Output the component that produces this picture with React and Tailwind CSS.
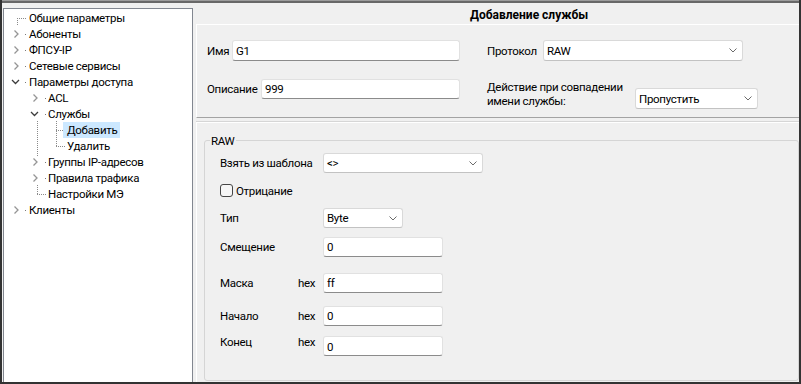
import React from 'react'

const font = "font-['Roboto','Liberation_Sans',sans-serif]"

const treeItems = [
  { label: 'Общие параметры', level: 0 },
  { label: 'Абоненты', level: 0, state: 'closed' },
  { label: 'ФПСУ-IP', level: 0, state: 'closed' },
  { label: 'Сетевые сервисы', level: 0, state: 'closed' },
  { label: 'Параметры доступа', level: 0, state: 'open' },
  { label: 'ACL', level: 1, state: 'closed' },
  { label: 'Службы', level: 1, state: 'open' },
  { label: 'Добавить', level: 2, selected: true },
  { label: 'Удалить', level: 2 },
  { label: 'Группы IP-адресов', level: 1, state: 'closed' },
  { label: 'Правила трафика', level: 1, state: 'closed' },
  { label: 'Настройки МЭ', level: 1 },
  { label: 'Клиенты', level: 0, state: 'closed' },
]

const indent = ['pl-[5px]', 'pl-[24px]', 'pl-[43px]']

function Expander({ state }) {
  return (
    <svg width="20" height="16" viewBox="0 0 20 16" className="shrink-0">
      {state === 'closed' && (
        <path d="M5.5 4.5 L9 8 L5.5 11.5" fill="none" stroke="#959595" strokeWidth="1.3" />
      )}
      {state === 'open' && (
        <path d="M3 6 L6.5 9.5 L10 6" fill="none" stroke="#3c3c3c" strokeWidth="1.3" />
      )}
    </svg>
  )
}

// dotted connector lines of the tree view
function TreeLines() {
  const dots = [
    [21, 25], [21, 41], [21, 57], [21, 73], [21, 201],
    [41, 89], [41, 105], [41, 153], [41, 169],
  ]
  const dash = { stroke: '#8a8a8a', strokeWidth: 1, strokeDasharray: '1 1', fill: 'none' }
  return (
    <svg className="pointer-events-none absolute inset-0" width="188" height="374">
      <path d="M13 9.5 H23" style={dash} />
      <path d="M13.5 9 V17" style={dash} />
      <path d="M33.5 112 V147" style={dash} />
      <path d="M33.5 176 V186" style={dash} />
      <path d="M33 185.5 H43" style={dash} />
      <path d="M52.5 112 V138" style={dash} />
      <path d="M52 121.5 H60" style={dash} />
      <path d="M52 137.5 H62" style={dash} />
      {dots.map(([x, y]) => (
        <rect key={`${x}-${y}`} x={x} y={y} width="1" height="1" fill="#7a7a7a" />
      ))}
    </svg>
  )
}

function Tree() {
  return (
    <div className="relative ml-px mt-[5px] w-[190px] shrink-0 border border-b-0 border-[#828790] bg-white pt-px">
      <TreeLines />
      {treeItems.map((item) => (
        <div key={item.label} className={`flex h-4 items-center ${indent[item.level]}`}>
          <Expander state={item.state} />
          <span
            className={
              item.selected
                ? '-ml-[4px] h-4 whitespace-nowrap bg-[#cce8ff] pl-[4px] pr-[3px] leading-4'
                : 'whitespace-nowrap leading-4'
            }
          >
            {item.label}
          </span>
        </div>
      ))}
    </div>
  )
}

function Chevron() {
  return (
    <svg width="8" height="5" viewBox="0 0 8 5" className="shrink-0">
      <path d="M0.5 0.5 L4 4 L7.5 0.5" fill="none" stroke="#6b6b6b" strokeWidth="1" />
    </svg>
  )
}

function Select({ value, className }) {
  return (
    <div
      className={`flex shrink-0 items-center justify-between rounded-[3px] border border-[#d9d9d9] border-b-[#c2c2c2] bg-white pl-[3px] pr-[5px] ${className}`}
    >
      <span>{value}</span>
      <Chevron />
    </div>
  )
}

function Input({ value, className }) {
  return (
    <div
      className={`flex shrink-0 items-center rounded-[3px] border border-[#e1e1e1] border-b-[#8b8b8b] bg-white pl-[3px] ${className}`}
    >
      {value}
    </div>
  )
}

function HexRow({ label, value, className }) {
  return (
    <div className={`flex h-[20px] items-center ${className}`}>
      <span className="w-[78px] shrink-0 whitespace-nowrap">{label}</span>
      <span className="w-[25px] shrink-0">hex</span>
      <Input value={value} className="h-full w-[120px]" />
    </div>
  )
}

export default function App() {
  return (
    <div
      className={`flex h-[384px] w-[801px] flex-col overflow-hidden border-b-2 border-l-2 border-r-2 border-[#333] bg-[#f0f0f0] text-[11.5px] leading-4 tracking-[-0.3px] text-black ${font}`}
    >
      <div className="h-px shrink-0 bg-[#9c9c9c]" />
      <div className="h-[2px] shrink-0 bg-[#686868]" />

      <div className="flex min-h-0 flex-1">
        <Tree />

        <main className="ml-[3px] flex min-w-0 flex-1 flex-col">
          {/* Title */}
          <div className="h-[21px] shrink-0 whitespace-nowrap pl-[274px] pt-[4px] text-[12px] font-bold tracking-normal">
            Добавление службы
          </div>

          {/* Name / protocol block */}
          <div className="flex h-[94px] shrink-0 border-b border-l border-t border-white border-b-[#a3a3a3]">
            <div className="ml-[10px] flex w-[253px] shrink-0 flex-col">
              <div className="mt-[15px] flex h-[21px] items-center">
                <span className="w-[25px] shrink-0 whitespace-nowrap">Имя</span>
                <Input value="G1" className="h-full flex-1" />
              </div>
              <div className="mt-[18px] flex h-[20px] items-center">
                <span className="w-[54px] shrink-0 whitespace-nowrap">Описание</span>
                <Input value="999" className="h-full flex-1" />
              </div>
            </div>

            <div className="ml-[27px] flex flex-col">
              <div className="mt-[15px] flex h-[21px] items-center">
                <span className="w-[56px] shrink-0 whitespace-nowrap">Протокол</span>
                <Select value="RAW" className="h-full w-[200px]" />
              </div>
              <div className="mt-[18px] flex items-start">
                <span className="w-[148px] shrink-0 whitespace-nowrap pt-px leading-[14px]">
                  Действие при совпадении
                  <br />
                  имени службы:
                </span>
                <Select value="Пропустить" className="mt-[9px] h-[21px] w-[123px]" />
              </div>
            </div>
          </div>

          {/* RAW parameters */}
          <div className="mt-[3px] flex min-h-0 flex-1 flex-col border-t border-[#d6d6d6]">
            <div className="flex min-h-0 flex-1 flex-col border-l border-t border-white">
              <div className="mb-px ml-[7px] mt-[17px] flex-1 rounded-[3px] border border-[#d5d5d5]">
                <div className="-mt-[8px] ml-[5px] w-fit bg-[#f0f0f0] px-px leading-4">RAW</div>

                <div className="pl-[15px]">
                  <div className="mt-[4px] flex h-[20px] items-center">
                    <span className="w-[103px] shrink-0 whitespace-nowrap">Взять из шаблона</span>
                    <Select value="<>" className="h-full w-[160px]" />
                  </div>

                  <div className="mt-[11px] flex h-[13px] items-center">
                    <span className="h-[13px] w-[13px] shrink-0 rounded-[3px] border border-[#454545] bg-[#f6f6f6]" />
                    <span className="ml-[3px]">Отрицание</span>
                  </div>

                  <div className="mt-[11px] flex h-[20px] items-center">
                    <span className="w-[103px] shrink-0">Тип</span>
                    <Select value="Byte" className="h-full w-[80px]" />
                  </div>

                  <div className="mt-[9px] flex h-[20px] items-center">
                    <span className="w-[103px] shrink-0">Смещение</span>
                    <Input value="0" className="h-full w-[120px]" />
                  </div>

                  <HexRow label="Маска" value="ff" className="mt-[16px]" />
                  <HexRow label="Начало" value="0" className="mt-[13px]" />

                  <div className="mt-[10px] flex h-[20px] items-start">
                    <span className="-mt-[2px] w-[78px] shrink-0">Конец</span>
                    <span className="-mt-[2px] w-[25px] shrink-0">hex</span>
                    <Input value="0" className="h-full w-[120px] pt-[2px]" />
                  </div>
                </div>
              </div>
            </div>
          </div>
        </main>
      </div>
    </div>
  )
}
